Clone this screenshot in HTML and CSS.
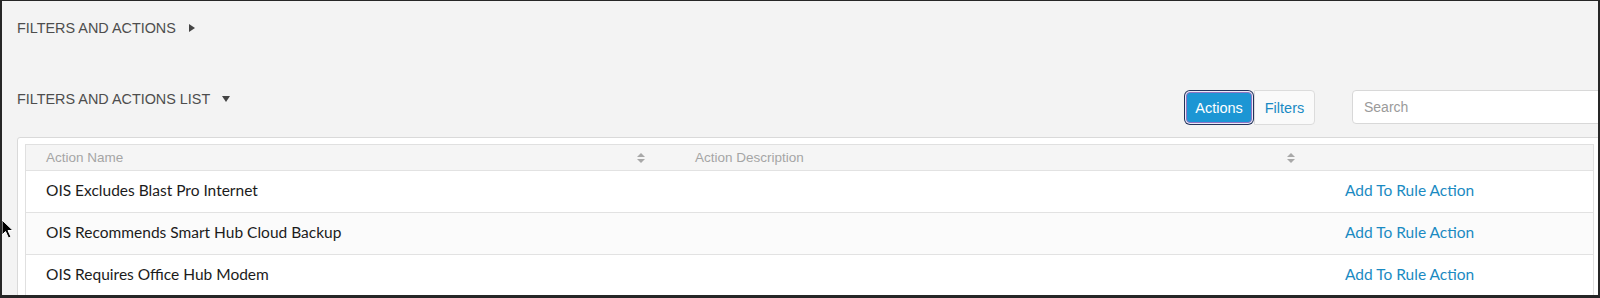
FILE: index.html
```html
<!DOCTYPE html>
<html lang="en">
<head>
  <meta charset="UTF-8" />
  <title>Filters and Actions</title>
  <link rel="stylesheet" href="styles.css">
</head>
<body>
  <div class="frame">
    <h2 class="section-title">FILTERS AND ACTIONS <span class="caret caret-right"></span></h2>

    <div class="list-bar">
      <h2 class="section-title">FILTERS AND ACTIONS LIST <span class="caret caret-down"></span></h2>
      <div class="toggle">
        <button class="toggle-btn active">Actions</button>
        <button class="toggle-btn">Filters</button>
      </div>
      <input class="search" type="text" placeholder="Search" />
    </div>

    <div class="panel">
      <div class="table">
        <div class="row head">
          <div class="cell">Action Name <span class="sort"></span></div>
          <div class="cell">Action Description <span class="sort"></span></div>
          <div class="cell"></div>
        </div>
        <div class="row">
          <div class="cell">OIS Excludes Blast Pro Internet</div>
          <div class="cell"></div>
          <div class="cell"><a href="#" class="link">Add To Rule Action</a></div>
        </div>
        <div class="row hover">
          <div class="cell">OIS Recommends Smart Hub Cloud Backup</div>
          <div class="cell"></div>
          <div class="cell"><a href="#" class="link">Add To Rule Action</a></div>
        </div>
        <div class="row">
          <div class="cell">OIS Requires Office Hub Modem</div>
          <div class="cell"></div>
          <div class="cell"><a href="#" class="link">Add To Rule Action</a></div>
        </div>
      </div>
    </div>

    <!-- mouse pointer from the screenshot -->
    <svg class="cursor" width="14" height="20" viewBox="0 0 14 20">
      <path d="M1 1 L1 16 L4.5 12.5 L7.5 19 L10 18 L7 11.5 L12 11.5 Z" fill="#000" stroke="#fff" stroke-width="1"/>
    </svg>
  </div>
</body>
</html>
```

FILE: styles.css
```css
* {
  box-sizing: border-box;
}
body {
  margin: 0;
  font-family: "Liberation Sans", Arial, sans-serif;
}
.frame {
  position: relative;
  width: 1600px;
  height: 298px;
  border-style: solid;
  border-color: #262626;
  border-width: 1px 2px 3px 2px;
  background: #f3f3f3;
  padding: 17px 0 0 15px;
  overflow: hidden;
}
.section-title {
  margin: 0;
  font-size: 14.4px;
  font-weight: normal;
  line-height: 20px;
  color: #4d4d4d;
  display: flex;
  align-items: center;
}
.caret {
  display: inline-block;
  width: 0;
  height: 0;
  margin-left: 12px;
}
.caret-right {
  border-top: 4px solid transparent;
  border-bottom: 4px solid transparent;
  border-left: 6px solid #444;
  margin-left: 13px;
}
.caret-down {
  border-left: 4px solid transparent;
  border-right: 4px solid transparent;
  border-top: 6px solid #444;
}
.list-bar {
  display: flex;
  align-items: flex-start;
  margin-top: 51px;
  margin-right: -20px;
}
.toggle {
  display: flex;
  margin-left: auto;
  margin-top: 1px;
}
.toggle-btn {
  font-family: "Liberation Sans", Arial, sans-serif;
  font-size: 14.5px;
  width: 61px;
  height: 35px;
  padding: 0;
  border: 1px solid #dcdcdc;
  background: #fafafa;
  color: #1a8ac4;
  border-radius: 0 4px 4px 0;
  cursor: pointer;
}
.toggle-btn.active {
  width: 66px;
  height: 31px;
  margin: 2px;
  background: #1c96d4;
  color: #fff;
  border: 1px solid #8d74c4;
  border-radius: 4px;
  box-shadow: 0 0 0 1px #eceaf6, 0 0 0 2px #22325a;
}
.search {
  width: 266px;
  height: 34px;
  margin: 1px 0 0 37px;
  padding: 0 11px;
  border: 1px solid #d8d8d8;
  border-radius: 4px;
  background: #fff;
  font-family: "Liberation Sans", Arial, sans-serif;
  font-size: 14px;
}
.search::placeholder {
  color: #9a9a9a;
}
.panel {
  margin-top: 12px;
  margin-right: -4px;
  padding: 6px 7px;
  background: #fff;
  border: 1px solid #d9d9d9;
  border-radius: 3px;
}
.table {
  border: 1px solid #e0e0e0;
}
.row {
  display: grid;
  grid-template-columns: 649px 650px 1fr;
  height: 42px;
  border-top: 1px solid #e2e2e2;
  background: #fff;
}
.row.hover {
  background: #fbfbfb;
}
.row.head {
  height: 25px;
  border-top: none;
  background: #f5f5f5;
}
.cell {
  display: flex;
  align-items: center;
  justify-content: space-between;
  padding: 0 30px 3px 20px;
  font-family: Lato, "Liberation Sans", sans-serif;
  font-size: 15.5px;
  color: #1b1b1b;
}
.head .cell {
  padding-bottom: 0;
  font-family: "Liberation Sans", Arial, sans-serif;
  font-size: 13.5px;
  color: #a5a5a5;
}
.sort {
  display: inline-flex;
  flex-direction: column;
  gap: 2px;
}
.sort::before,
.sort::after {
  content: "";
  width: 0;
  height: 0;
  border-left: 4.5px solid transparent;
  border-right: 4.5px solid transparent;
}
.sort::before {
  border-bottom: 4px solid #a8a8a8;
}
.sort::after {
  border-top: 4px solid #a8a8a8;
}
.link {
  color: #1a8ac2;
  text-decoration: none;
}
.cursor {
  position: absolute;
  left: -1px;
  top: 218px;
}
```
